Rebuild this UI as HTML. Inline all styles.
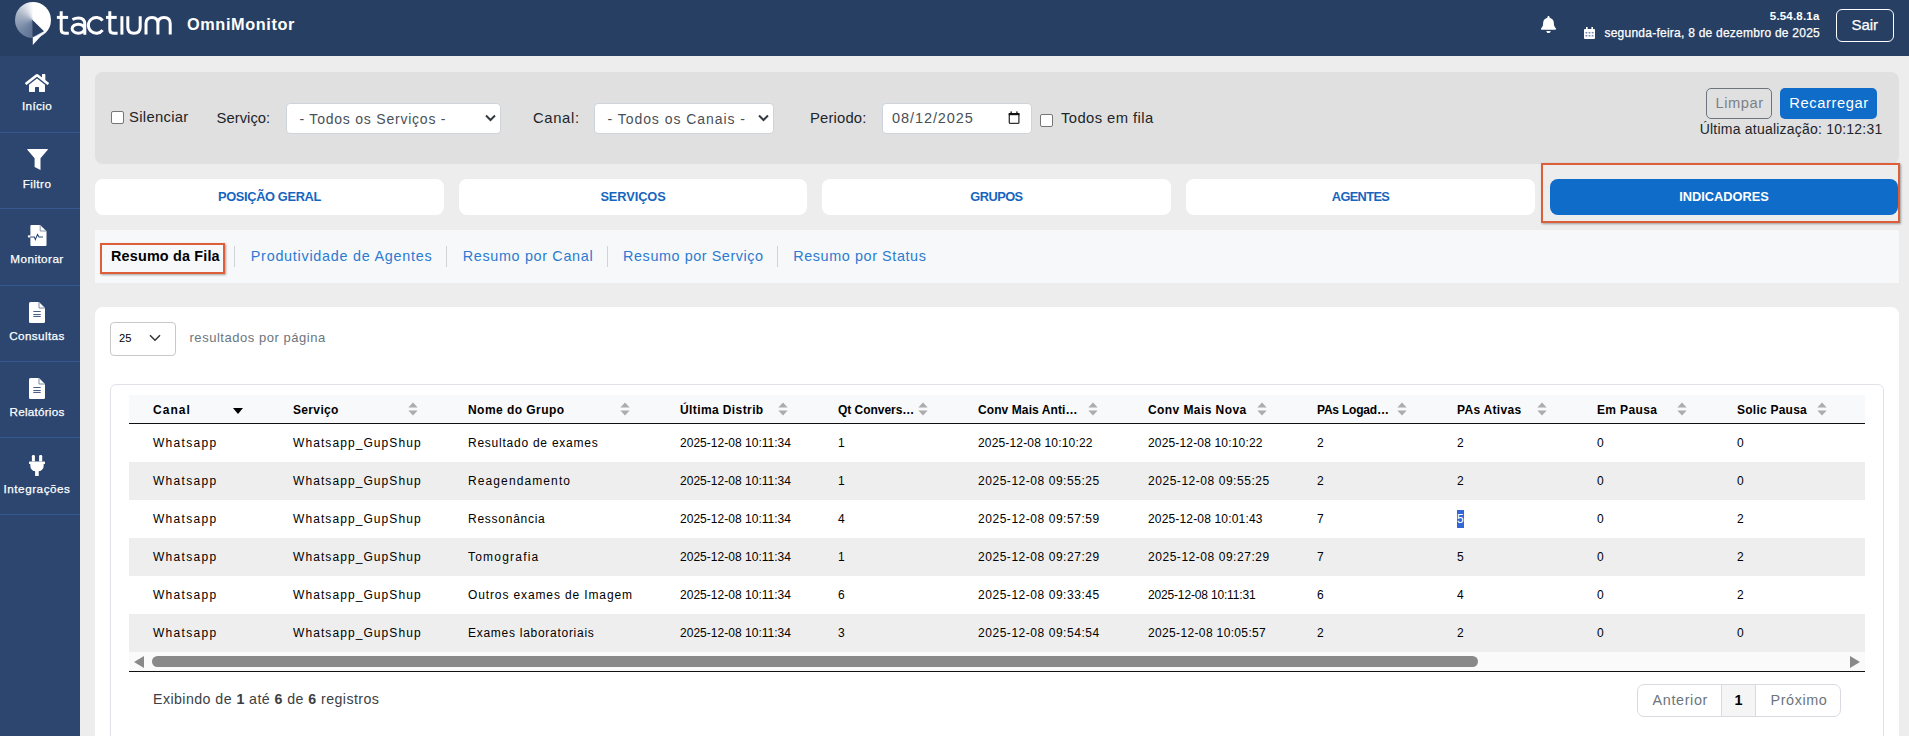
<!DOCTYPE html>
<html><head><meta charset="utf-8"><style>
html,body{margin:0;padding:0;width:1909px;height:736px;overflow:hidden;background:#ededed;}
body{position:relative;font-family:"Liberation Sans", sans-serif;}
.r{position:absolute;box-sizing:content-box;}
.t{position:absolute;white-space:nowrap;line-height:1;}
</style></head><body>
<div class="r" style="left:0px;top:0px;width:1909px;height:56px;background:#283f64;"></div>
<div class="r" style="left:0px;top:56px;width:80px;height:680px;background:#2c4670;"></div>
<div class="r" style="left:0px;top:132px;width:80px;height:1px;background:#34588e;"></div>
<div class="r" style="left:0px;top:208px;width:80px;height:1px;background:#34588e;"></div>
<div class="r" style="left:0px;top:285px;width:80px;height:1px;background:#34588e;"></div>
<div class="r" style="left:0px;top:361px;width:80px;height:1px;background:#34588e;"></div>
<div class="r" style="left:0px;top:437px;width:80px;height:1px;background:#34588e;"></div>
<div class="r" style="left:0px;top:514px;width:80px;height:1px;background:#34588e;"></div>
<div class="r" style="left:15px;top:2px;width:36px;height:36px;border-radius:50%;background:conic-gradient(from 0deg, #ffffff 0deg, #ffffff 135deg, #5f7193 180deg, #7688a6 230deg, #a6b1c4 290deg, #d9dde6 330deg, #ffffff 360deg);"></div>
<svg class="r" style="left:0;top:0" width="60" height="56" viewBox="0 0 60 56">
<path d="M32.5 20 L44 31.3 L32.5 37 Z" fill="#283f64"/>
<path d="M32.8 37.6 L44.5 32 L46 30.5 L32.8 45 Z" fill="#ffffff"/>
</svg>
<svg class="r" style="left:0;top:0" width="180" height="56" viewBox="0 0 180 56" fill="none" stroke="#fff" stroke-width="3.0">
<path d="M61.2 11.2 V29.5 Q61.2 33.2 65 33.2 H68.8"/><path d="M56.9 17.4 H68.1"/>
<path d="M72.4 19.5 Q75.5 17.9 78.5 17.9 Q84.8 17.9 84.8 24 V34.8"/><ellipse cx="78.3" cy="28.7" rx="6.2" ry="4.5"/>
<path d="M102.6 20.6 A7.9 7.9 0 1 0 102.6 30.1"/>
<path d="M109.8 11.2 V29.5 Q109.8 33.2 113.6 33.2 H117.6"/><path d="M106 17.4 H116.7"/>
<path d="M121.9 16.2 V34.6"/>
<path d="M127.8 16.2 V27 Q127.8 33.2 134 33.2 Q140.2 33.2 140.2 27 V16.2"/>
<path d="M146 34.6 V23.5 Q146 17.4 152 17.4 Q157.9 17.4 157.9 23.5 V34.6 M157.9 23.5 Q157.9 17.4 164 17.4 Q170.2 17.4 170.2 23.5 V34.6"/>
</svg>
<div class="t" style="left:187px;top:16.40px;font-size:16.3px;font-weight:700;color:#fff;letter-spacing:0.610px;">OmniMonitor</div>
<svg class="r" style="left:1541px;top:16px" width="15" height="17" viewBox="0 0 448 512" preserveAspectRatio="none"><path fill="#fff" d="M224 512c35.3 0 64-28.7 64-64H160c0 35.3 28.7 64 64 64zm215.4-149.7c-19.3-20.8-55.5-52-55.5-154.3 0-77.700-54.5-139.9-127.9-155.2V32c0-17.7-14.3-32-32-32s-32 14.3-32 32v20.8C118.6 68.1 64.1 130.3 64.1 208c0 102.3-36.2 133.5-55.5 154.3-6 6.5-8.7 14.2-8.600 21.7.1 16.4 13 32 32.1 32h383.8c19.1 0 32-15.6 32.1-32 .1-7.6-2.6-15.3-8.6-21.7z"/></svg>
<div class="t" style="right:89.5px;top:11.47px;font-size:11.5px;font-weight:700;color:#fff;letter-spacing:0.191px;">5.54.8.1a</div>
<svg class="r" style="left:1584px;top:27px" width="11" height="12" viewBox="0 0 11 12"><rect x="0" y="2" width="11" height="10" rx="1" fill="#fff"/><rect x="2" y="0" width="1.6" height="3" fill="#fff"/><rect x="7.4" y="0" width="1.6" height="3" fill="#fff"/><g fill="#7b8ab0"><rect x="1.5" y="5" width="1.8" height="1.5"/><rect x="4.6" y="5" width="1.8" height="1.5"/><rect x="7.7" y="5" width="1.8" height="1.5"/><rect x="1.5" y="8" width="1.8" height="1.5"/><rect x="4.6" y="8" width="1.8" height="1.5"/><rect x="7.7" y="8" width="1.8" height="1.5"/></g></svg>
<div class="t" style="right:89px;top:27.04px;font-size:12px;font-weight:400;color:#fff;letter-spacing:0.243px;-webkit-text-stroke:0.25px currentColor;">segunda-feira, 8 de dezembro de 2025</div>
<div class="r" style="left:1836px;top:9px;width:56px;height:31px;border:1px solid #fff;border-radius:6px;"></div>
<div class="t" style="left:1851.5px;top:16.50px;font-size:15px;font-weight:400;color:#fff;letter-spacing:-0.029px;-webkit-text-stroke:0.25px currentColor;">Sair</div>
<div class="t" style="left:-263px;width:600px;text-align:center;top:100.10px;font-size:11.7px;font-weight:400;color:#fff;letter-spacing:0.352px;-webkit-text-stroke:0.25px currentColor;">Início</div>
<div class="t" style="left:-263px;width:600px;text-align:center;top:177.60px;font-size:11.7px;font-weight:400;color:#fff;letter-spacing:0.463px;-webkit-text-stroke:0.25px currentColor;">Filtro</div>
<div class="t" style="left:-263px;width:600px;text-align:center;top:253.40px;font-size:11.7px;font-weight:400;color:#fff;letter-spacing:0.441px;-webkit-text-stroke:0.25px currentColor;">Monitorar</div>
<div class="t" style="left:-263px;width:600px;text-align:center;top:330.10px;font-size:11.7px;font-weight:400;color:#fff;letter-spacing:0.389px;-webkit-text-stroke:0.25px currentColor;">Consultas</div>
<div class="t" style="left:-263px;width:600px;text-align:center;top:406.10px;font-size:11.7px;font-weight:400;color:#fff;letter-spacing:0.242px;-webkit-text-stroke:0.25px currentColor;">Relatórios</div>
<div class="t" style="left:-263px;width:600px;text-align:center;top:483.10px;font-size:11.7px;font-weight:400;color:#fff;letter-spacing:0.542px;-webkit-text-stroke:0.25px currentColor;">Integrações</div>
<svg class="r" style="left:25.2px;top:73.5px" width="24" height="18" viewBox="0 0 576 450" preserveAspectRatio="none"><path fill="#fff" d="M280.4 148.3L96 300.1V464a16 16 0 0 0 16 16l112.1-.3a16 16 0 0 0 15.9-16V368a16 16 0 0 1 16-16h64a16 16 0 0 1 16 16v95.6a16 16 0 0 0 16 16.1l112.1.3a16 16 0 0 0 16-16V300L295.7 148.3a12.2 12.2 0 0 0-15.3 0zM571.6 251.5L488 182.6V44.1a12 12 0 0 0-12-12h-56a12 12 0 0 0-12 12v72.6L318.5 43a48 48 0 0 0-61 0L4.3 251.5a12 12 0 0 0-1.6 16.9l25.5 31A12 12 0 0 0 45.2 301l235.2-193.7a12.2 12.2 0 0 1 15.3 0L530.9 301a12 12 0 0 0 16.9-1.6l25.5-31a12 12 0 0 0-1.7-16.9z" transform="translate(0,-30)"/></svg>
<svg class="r" style="left:26.5px;top:149px" width="22" height="22" viewBox="0 0 22 22"><path fill="#fff" d="M0.6 0 H20.5 Q21.2 0 20.8 0.7 L13.5 9.2 V20.9 L7.6 18 V9.2 L0.3 0.8 Q0 0 0.6 0 Z"/></svg>
<svg class="r" style="left:22px;top:220px" width="30" height="30" viewBox="0 0 30 30"><path fill="#fff" d="M9.4 4.9 H18.2 L24.5 11.2 V24.9 Q24.5 25.9 23.5 25.9 H9.4 Q8.4 25.9 8.4 24.9 V5.9 Q8.4 4.9 9.4 4.9 Z"/><path fill="none" stroke="#7d8aa3" stroke-width="0.9" d="M18.2 4.9 V11 H24.5"/><rect x="5.9" y="15.4" width="3" height="2" fill="#fff"/><path fill="none" stroke="#2c4670" stroke-width="1.1" d="M8.2 17 H12.4 L13.4 19.6 L15.5 14.4 L17 17 H21"/></svg>
<svg class="r" style="left:29px;top:302px" width="16" height="21" viewBox="0 0 16 21"><path fill="#fff" d="M1.5 0 H10 L16 6 V19.5 Q16 21 14.5 21 H1.5 Q0 21 0 19.5 V1.5 Q0 0 1.5 0 Z"/><path fill="none" stroke="#7d8aa3" stroke-width="1" d="M10 0 V6 H16"/><g fill="#4a5f85"><rect x="4.3" y="9" width="7.4" height="1"/><rect x="4.3" y="12" width="7.4" height="1.1"/><rect x="4.3" y="14" width="7.4" height="1"/></g></svg>
<svg class="r" style="left:29px;top:378px" width="16" height="21" viewBox="0 0 16 21"><path fill="#fff" d="M1.5 0 H10 L16 6 V19.5 Q16 21 14.5 21 H1.5 Q0 21 0 19.5 V1.5 Q0 0 1.5 0 Z"/><path fill="none" stroke="#7d8aa3" stroke-width="1" d="M10 0 V6 H16"/><g fill="#4a5f85"><rect x="4.3" y="9" width="7.4" height="1"/><rect x="4.3" y="12" width="7.4" height="1.1"/><rect x="4.3" y="14" width="7.4" height="1"/></g></svg>
<svg class="r" style="left:29px;top:455px" width="16" height="21" viewBox="0 0 16 21"><g fill="#fff"><rect x="2.9" y="0" width="3" height="6.5" rx="1.2"/><rect x="10.1" y="0" width="3.1" height="6.5" rx="1.2"/><path d="M0.6 6.4 H15.4 Q16 6.4 16 7.2 V8.4 Q16 9 15.4 9 H14.7 V10.2 Q14.7 15.4 9.7 16.3 V21 H6.1 V16.3 Q1.3 15.4 1.3 10.2 V9 H0.6 Q0 9 0 8.4 V7.2 Q0 6.4 0.6 6.4 Z"/></g></svg>
<div class="r" style="left:80px;top:56px;width:1829px;height:680px;background:#ededed;"></div>
<div class="r" style="left:95px;top:72px;width:1804px;height:92px;background:#e0e0e0;border-radius:8px;"></div>
<div class="r" style="left:111px;top:111px;width:11px;height:11px;border:1px solid #767676;border-radius:2px;background:#fff;"></div>
<div class="t" style="left:129px;top:110.47px;font-size:14.8px;font-weight:400;color:#212529;letter-spacing:0.319px;">Silenciar</div>
<div class="t" style="left:216.5px;top:111.47px;font-size:14.8px;font-weight:400;color:#212529;letter-spacing:0.035px;">Serviço:</div>
<div class="r" style="left:286px;top:103px;width:213px;height:29px;border:1px solid #ced4da;border-radius:4px;background:#fff;"></div>
<div class="t" style="left:299.5px;top:112.05px;font-size:14px;font-weight:400;color:#495057;letter-spacing:0.777px;">- Todos os Serviços -</div>
<svg class="r" style="left:485px;top:114px" width="11" height="8" viewBox="0 0 11 8"><path d="M1 1.5 L5.5 6 L10 1.5" fill="none" stroke="#343a40" stroke-width="2"/></svg>
<div class="t" style="left:533px;top:111.47px;font-size:14.8px;font-weight:400;color:#212529;letter-spacing:0.644px;">Canal:</div>
<div class="r" style="left:594px;top:103px;width:178px;height:29px;border:1px solid #ced4da;border-radius:4px;background:#fff;"></div>
<div class="t" style="left:607.5px;top:112.05px;font-size:14px;font-weight:400;color:#495057;letter-spacing:0.952px;">- Todos os Canais -</div>
<svg class="r" style="left:758px;top:114px" width="11" height="8" viewBox="0 0 11 8"><path d="M1 1.5 L5.5 6 L10 1.5" fill="none" stroke="#343a40" stroke-width="2"/></svg>
<div class="t" style="left:810px;top:111.47px;font-size:14.8px;font-weight:400;color:#212529;letter-spacing:0.182px;">Periodo:</div>
<div class="r" style="left:882px;top:103px;width:148px;height:29px;border:1px solid #ced4da;border-radius:4px;background:#fff;"></div>
<div class="t" style="left:892px;top:111.03px;font-size:14.5px;font-weight:400;color:#495057;letter-spacing:0.925px;">08/12/2025</div>
<svg class="r" style="left:1008px;top:111px" width="12" height="13" viewBox="0 0 12 13"><rect x="1.3" y="2.6" width="9.6" height="9.8" rx="1" fill="none" stroke="#333" stroke-width="1.3"/><rect x="0.7" y="2" width="10.8" height="2.2" fill="#111"/><rect x="2.5" y="0.4" width="1.3" height="2" fill="#111"/><rect x="8.3" y="0.4" width="1.3" height="2" fill="#111"/></svg>
<div class="r" style="left:1040px;top:114px;width:11px;height:11px;border:1px solid #767676;border-radius:2px;background:#fff;"></div>
<div class="t" style="left:1061px;top:111.47px;font-size:14.8px;font-weight:400;color:#212529;letter-spacing:0.418px;">Todos em fila</div>
<div class="r" style="left:1706px;top:88px;width:64px;height:29px;border:1px solid #6c757d;border-radius:5px;"></div>
<div class="t" style="left:1715.5px;top:95.66px;font-size:14.7px;font-weight:400;color:#7b8288;letter-spacing:0.559px;">Limpar</div>
<div class="r" style="left:1780px;top:88px;width:97px;height:31px;background:#0f6cc9;border-radius:5px;"></div>
<div class="t" style="left:1789.3px;top:95.66px;font-size:14.7px;font-weight:400;color:#fff;letter-spacing:0.603px;">Recarregar</div>
<div class="t" style="right:26.5px;top:122.05px;font-size:14px;font-weight:400;color:#212529;letter-spacing:0.220px;">Última atualização: 10:12:31</div>
<div class="r" style="left:95px;top:179px;width:349px;height:36px;background:#fff;border-radius:8px;"></div>
<div class="t" style="left:-30.5px;width:600px;text-align:center;top:191.16px;font-size:12.8px;font-weight:700;color:#1565c0;letter-spacing:-0.348px;">POSIÇÃO GERAL</div>
<div class="r" style="left:459px;top:179px;width:348px;height:36px;background:#fff;border-radius:8px;"></div>
<div class="t" style="left:333.0px;width:600px;text-align:center;top:191.16px;font-size:12.8px;font-weight:700;color:#1565c0;letter-spacing:-0.087px;">SERVIÇOS</div>
<div class="r" style="left:822px;top:179px;width:349px;height:36px;background:#fff;border-radius:8px;"></div>
<div class="t" style="left:696.5px;width:600px;text-align:center;top:191.16px;font-size:12.8px;font-weight:700;color:#1565c0;letter-spacing:-0.534px;">GRUPOS</div>
<div class="r" style="left:1186px;top:179px;width:349px;height:36px;background:#fff;border-radius:8px;"></div>
<div class="t" style="left:1060.5px;width:600px;text-align:center;top:191.16px;font-size:12.8px;font-weight:700;color:#1565c0;letter-spacing:-0.646px;">AGENTES</div>
<div class="r" style="left:1550px;top:179px;width:348px;height:36px;background:#0f6cc9;border-radius:8px;"></div>
<div class="t" style="left:1424.0px;width:600px;text-align:center;top:191.16px;font-size:12.8px;font-weight:700;color:#fff;letter-spacing:-0.019px;">INDICADORES</div>
<div class="r" style="left:1541px;top:163px;width:355px;height:56px;border:2px solid #dc5f3a;box-shadow:1px 1px 2px rgba(0,0,0,0.35);"></div>
<div class="r" style="left:95px;top:230px;width:1804px;height:53px;background:#f7f8fa;"></div>
<div class="r" style="left:100px;top:243px;width:121px;height:27px;border:2px solid #dc5f3a;box-shadow:1px 1px 2px rgba(0,0,0,0.35);"></div>
<div class="t" style="left:111px;top:249.01px;font-size:14.4px;font-weight:700;color:#000;letter-spacing:0.172px;">Resumo da Fila</div>
<div class="t" style="left:250.8px;top:249.01px;font-size:14.4px;font-weight:400;color:#2b7bd1;letter-spacing:0.729px;">Produtividade de Agentes</div>
<div class="t" style="left:462.7px;top:249.01px;font-size:14.4px;font-weight:400;color:#2b7bd1;letter-spacing:0.661px;">Resumo por Canal</div>
<div class="t" style="left:623.1px;top:249.01px;font-size:14.4px;font-weight:400;color:#2b7bd1;letter-spacing:0.566px;">Resumo por Serviço</div>
<div class="t" style="left:793.2px;top:249.01px;font-size:14.4px;font-weight:400;color:#2b7bd1;letter-spacing:0.595px;">Resumo por Status</div>
<div class="r" style="left:234px;top:246px;width:1px;height:21px;background:#d0d3d8;"></div>
<div class="r" style="left:446px;top:246px;width:1px;height:21px;background:#d0d3d8;"></div>
<div class="r" style="left:607px;top:246px;width:1px;height:21px;background:#d0d3d8;"></div>
<div class="r" style="left:777px;top:246px;width:1px;height:21px;background:#d0d3d8;"></div>
<div class="r" style="left:95px;top:307px;width:1804px;height:453px;background:#fff;border-radius:8px;"></div>
<div class="r" style="left:110px;top:322px;width:64px;height:32px;border:1px solid #c8c8c8;border-radius:4px;"></div>
<div class="t" style="left:119px;top:332.72px;font-size:11.2px;font-weight:400;color:#000;letter-spacing:0.000px;">25</div>
<svg class="r" style="left:149px;top:334px" width="12" height="8" viewBox="0 0 12 8"><path d="M1 1.2 L6 6.2 L11 1.2" fill="none" stroke="#333" stroke-width="1.5"/></svg>
<div class="t" style="left:189.5px;top:331.20px;font-size:13px;font-weight:400;color:#6c757d;letter-spacing:0.533px;">resultados por página</div>
<div class="r" style="left:110px;top:384px;width:1772px;height:400px;border:1px solid #dfe3e8;border-radius:6px;"></div>
<div class="r" style="left:129px;top:395px;width:1736px;height:28px;background:#f8f9fa;"></div>
<div class="r" style="left:129px;top:423px;width:1736px;height:1px;background:#111;"></div>
<div class="t" style="left:153px;top:404.04px;font-size:12px;font-weight:700;color:#000;letter-spacing:1.028px;">Canal</div>
<svg class="r" style="left:233px;top:408px" width="10" height="6" viewBox="0 0 10 6"><path d="M0 0 H10 L5 6 Z" fill="#000"/></svg>
<div class="t" style="left:293px;top:404.04px;font-size:12px;font-weight:700;color:#000;letter-spacing:0.340px;">Serviço</div>
<svg class="r" style="left:408.2px;top:401.5px" width="10" height="14" viewBox="0 0 10 14"><path d="M0.35 5.4 L5 0.4 L9.65 5.4 Z M0.35 8.4 L5 13.4 L9.65 8.4 Z" fill="#acacac"/></svg>
<div class="t" style="left:468px;top:404.04px;font-size:12px;font-weight:700;color:#000;letter-spacing:0.452px;">Nome do Grupo</div>
<svg class="r" style="left:619.7px;top:401.5px" width="10" height="14" viewBox="0 0 10 14"><path d="M0.35 5.4 L5 0.4 L9.65 5.4 Z M0.35 8.4 L5 13.4 L9.65 8.4 Z" fill="#acacac"/></svg>
<div class="t" style="left:680px;top:404.04px;font-size:12px;font-weight:700;color:#000;letter-spacing:0.399px;">Última Distrib</div>
<svg class="r" style="left:778.1px;top:401.5px" width="10" height="14" viewBox="0 0 10 14"><path d="M0.35 5.4 L5 0.4 L9.65 5.4 Z M0.35 8.4 L5 13.4 L9.65 8.4 Z" fill="#acacac"/></svg>
<div class="t" style="left:838px;top:404.04px;font-size:12px;font-weight:700;color:#000;letter-spacing:-0.039px;">Qt Convers…</div>
<svg class="r" style="left:918.1px;top:401.5px" width="10" height="14" viewBox="0 0 10 14"><path d="M0.35 5.4 L5 0.4 L9.65 5.4 Z M0.35 8.4 L5 13.4 L9.65 8.4 Z" fill="#acacac"/></svg>
<div class="t" style="left:978px;top:404.04px;font-size:12px;font-weight:700;color:#000;letter-spacing:0.090px;">Conv Mais Anti…</div>
<svg class="r" style="left:1087.9px;top:401.5px" width="10" height="14" viewBox="0 0 10 14"><path d="M0.35 5.4 L5 0.4 L9.65 5.4 Z M0.35 8.4 L5 13.4 L9.65 8.4 Z" fill="#acacac"/></svg>
<div class="t" style="left:1148px;top:404.04px;font-size:12px;font-weight:700;color:#000;letter-spacing:0.423px;">Conv Mais Nova</div>
<svg class="r" style="left:1256.7px;top:401.5px" width="10" height="14" viewBox="0 0 10 14"><path d="M0.35 5.4 L5 0.4 L9.65 5.4 Z M0.35 8.4 L5 13.4 L9.65 8.4 Z" fill="#acacac"/></svg>
<div class="t" style="left:1317px;top:404.04px;font-size:12px;font-weight:700;color:#000;letter-spacing:-0.209px;">PAs Logad…</div>
<svg class="r" style="left:1397.4px;top:401.5px" width="10" height="14" viewBox="0 0 10 14"><path d="M0.35 5.4 L5 0.4 L9.65 5.4 Z M0.35 8.4 L5 13.4 L9.65 8.4 Z" fill="#acacac"/></svg>
<div class="t" style="left:1457px;top:404.04px;font-size:12px;font-weight:700;color:#000;letter-spacing:0.305px;">PAs Ativas</div>
<svg class="r" style="left:1537.2px;top:401.5px" width="10" height="14" viewBox="0 0 10 14"><path d="M0.35 5.4 L5 0.4 L9.65 5.4 Z M0.35 8.4 L5 13.4 L9.65 8.4 Z" fill="#acacac"/></svg>
<div class="t" style="left:1597px;top:404.04px;font-size:12px;font-weight:700;color:#000;letter-spacing:0.361px;">Em Pausa</div>
<svg class="r" style="left:1677.0px;top:401.5px" width="10" height="14" viewBox="0 0 10 14"><path d="M0.35 5.4 L5 0.4 L9.65 5.4 Z M0.35 8.4 L5 13.4 L9.65 8.4 Z" fill="#acacac"/></svg>
<div class="t" style="left:1737px;top:404.04px;font-size:12px;font-weight:700;color:#000;letter-spacing:0.242px;">Solic Pausa</div>
<svg class="r" style="left:1817.3px;top:401.5px" width="10" height="14" viewBox="0 0 10 14"><path d="M0.35 5.4 L5 0.4 L9.65 5.4 Z M0.35 8.4 L5 13.4 L9.65 8.4 Z" fill="#acacac"/></svg>
<div class="t" style="left:153px;top:437.04px;font-size:12px;font-weight:400;color:#000;letter-spacing:1.296px;">Whatsapp</div>
<div class="t" style="left:293px;top:437.04px;font-size:12px;font-weight:400;color:#000;letter-spacing:1.079px;">Whatsapp_GupShup</div>
<div class="t" style="left:468px;top:437.04px;font-size:12px;font-weight:400;color:#000;letter-spacing:0.757px;">Resultado de exames</div>
<div class="t" style="left:680px;top:437.04px;font-size:12px;font-weight:400;color:#000;letter-spacing:0.025px;">2025-12-08 10:11:34</div>
<div class="t" style="left:838px;top:437.04px;font-size:12px;font-weight:400;color:#000;letter-spacing:0.000px;">1</div>
<div class="t" style="left:978px;top:437.04px;font-size:12px;font-weight:400;color:#000;letter-spacing:0.165px;">2025-12-08 10:10:22</div>
<div class="t" style="left:1148px;top:437.04px;font-size:12px;font-weight:400;color:#000;letter-spacing:0.165px;">2025-12-08 10:10:22</div>
<div class="t" style="left:1317px;top:437.04px;font-size:12px;font-weight:400;color:#000;letter-spacing:0.000px;">2</div>
<div class="t" style="left:1457px;top:437.04px;font-size:12px;font-weight:400;color:#000;letter-spacing:0.000px;">2</div>
<div class="t" style="left:1597px;top:437.04px;font-size:12px;font-weight:400;color:#000;letter-spacing:0.000px;">0</div>
<div class="t" style="left:1737px;top:437.04px;font-size:12px;font-weight:400;color:#000;letter-spacing:0.000px;">0</div>
<div class="r" style="left:129px;top:462px;width:1736px;height:38px;background:#eeeeee;"></div>
<div class="t" style="left:153px;top:475.04px;font-size:12px;font-weight:400;color:#000;letter-spacing:1.296px;">Whatsapp</div>
<div class="t" style="left:293px;top:475.04px;font-size:12px;font-weight:400;color:#000;letter-spacing:1.079px;">Whatsapp_GupShup</div>
<div class="t" style="left:468px;top:475.04px;font-size:12px;font-weight:400;color:#000;letter-spacing:1.105px;">Reagendamento</div>
<div class="t" style="left:680px;top:475.04px;font-size:12px;font-weight:400;color:#000;letter-spacing:0.025px;">2025-12-08 10:11:34</div>
<div class="t" style="left:838px;top:475.04px;font-size:12px;font-weight:400;color:#000;letter-spacing:0.000px;">1</div>
<div class="t" style="left:978px;top:475.04px;font-size:12px;font-weight:400;color:#000;letter-spacing:0.542px;">2025-12-08 09:55:25</div>
<div class="t" style="left:1148px;top:475.04px;font-size:12px;font-weight:400;color:#000;letter-spacing:0.542px;">2025-12-08 09:55:25</div>
<div class="t" style="left:1317px;top:475.04px;font-size:12px;font-weight:400;color:#000;letter-spacing:0.000px;">2</div>
<div class="t" style="left:1457px;top:475.04px;font-size:12px;font-weight:400;color:#000;letter-spacing:0.000px;">2</div>
<div class="t" style="left:1597px;top:475.04px;font-size:12px;font-weight:400;color:#000;letter-spacing:0.000px;">0</div>
<div class="t" style="left:1737px;top:475.04px;font-size:12px;font-weight:400;color:#000;letter-spacing:0.000px;">0</div>
<div class="t" style="left:153px;top:513.04px;font-size:12px;font-weight:400;color:#000;letter-spacing:1.296px;">Whatsapp</div>
<div class="t" style="left:293px;top:513.04px;font-size:12px;font-weight:400;color:#000;letter-spacing:1.079px;">Whatsapp_GupShup</div>
<div class="t" style="left:468px;top:513.04px;font-size:12px;font-weight:400;color:#000;letter-spacing:0.742px;">Ressonância</div>
<div class="t" style="left:680px;top:513.04px;font-size:12px;font-weight:400;color:#000;letter-spacing:0.025px;">2025-12-08 10:11:34</div>
<div class="t" style="left:838px;top:513.04px;font-size:12px;font-weight:400;color:#000;letter-spacing:0.000px;">4</div>
<div class="t" style="left:978px;top:513.04px;font-size:12px;font-weight:400;color:#000;letter-spacing:0.542px;">2025-12-08 09:57:59</div>
<div class="t" style="left:1148px;top:513.04px;font-size:12px;font-weight:400;color:#000;letter-spacing:0.165px;">2025-12-08 10:01:43</div>
<div class="t" style="left:1317px;top:513.04px;font-size:12px;font-weight:400;color:#000;letter-spacing:0.000px;">7</div>
<div class="r" style="left:1457px;top:510px;width:7px;height:18px;background:#3367d6;"></div>
<div class="t" style="left:1457px;top:513.04px;font-size:12px;font-weight:400;color:#fff;letter-spacing:0.000px;">5</div>
<div class="t" style="left:1597px;top:513.04px;font-size:12px;font-weight:400;color:#000;letter-spacing:0.000px;">0</div>
<div class="t" style="left:1737px;top:513.04px;font-size:12px;font-weight:400;color:#000;letter-spacing:0.000px;">2</div>
<div class="r" style="left:129px;top:538px;width:1736px;height:38px;background:#eeeeee;"></div>
<div class="t" style="left:153px;top:551.04px;font-size:12px;font-weight:400;color:#000;letter-spacing:1.296px;">Whatsapp</div>
<div class="t" style="left:293px;top:551.04px;font-size:12px;font-weight:400;color:#000;letter-spacing:1.079px;">Whatsapp_GupShup</div>
<div class="t" style="left:468px;top:551.04px;font-size:12px;font-weight:400;color:#000;letter-spacing:1.214px;">Tomografia</div>
<div class="t" style="left:680px;top:551.04px;font-size:12px;font-weight:400;color:#000;letter-spacing:0.025px;">2025-12-08 10:11:34</div>
<div class="t" style="left:838px;top:551.04px;font-size:12px;font-weight:400;color:#000;letter-spacing:0.000px;">1</div>
<div class="t" style="left:978px;top:551.04px;font-size:12px;font-weight:400;color:#000;letter-spacing:0.542px;">2025-12-08 09:27:29</div>
<div class="t" style="left:1148px;top:551.04px;font-size:12px;font-weight:400;color:#000;letter-spacing:0.542px;">2025-12-08 09:27:29</div>
<div class="t" style="left:1317px;top:551.04px;font-size:12px;font-weight:400;color:#000;letter-spacing:0.000px;">7</div>
<div class="t" style="left:1457px;top:551.04px;font-size:12px;font-weight:400;color:#000;letter-spacing:0.000px;">5</div>
<div class="t" style="left:1597px;top:551.04px;font-size:12px;font-weight:400;color:#000;letter-spacing:0.000px;">0</div>
<div class="t" style="left:1737px;top:551.04px;font-size:12px;font-weight:400;color:#000;letter-spacing:0.000px;">2</div>
<div class="t" style="left:153px;top:589.04px;font-size:12px;font-weight:400;color:#000;letter-spacing:1.296px;">Whatsapp</div>
<div class="t" style="left:293px;top:589.04px;font-size:12px;font-weight:400;color:#000;letter-spacing:1.079px;">Whatsapp_GupShup</div>
<div class="t" style="left:468px;top:589.04px;font-size:12px;font-weight:400;color:#000;letter-spacing:0.876px;">Outros exames de Imagem</div>
<div class="t" style="left:680px;top:589.04px;font-size:12px;font-weight:400;color:#000;letter-spacing:0.025px;">2025-12-08 10:11:34</div>
<div class="t" style="left:838px;top:589.04px;font-size:12px;font-weight:400;color:#000;letter-spacing:0.000px;">6</div>
<div class="t" style="left:978px;top:589.04px;font-size:12px;font-weight:400;color:#000;letter-spacing:0.542px;">2025-12-08 09:33:45</div>
<div class="t" style="left:1148px;top:589.04px;font-size:12px;font-weight:400;color:#000;letter-spacing:-0.164px;">2025-12-08 10:11:31</div>
<div class="t" style="left:1317px;top:589.04px;font-size:12px;font-weight:400;color:#000;letter-spacing:0.000px;">6</div>
<div class="t" style="left:1457px;top:589.04px;font-size:12px;font-weight:400;color:#000;letter-spacing:0.000px;">4</div>
<div class="t" style="left:1597px;top:589.04px;font-size:12px;font-weight:400;color:#000;letter-spacing:0.000px;">0</div>
<div class="t" style="left:1737px;top:589.04px;font-size:12px;font-weight:400;color:#000;letter-spacing:0.000px;">2</div>
<div class="r" style="left:129px;top:614px;width:1736px;height:38px;background:#eeeeee;"></div>
<div class="t" style="left:153px;top:627.04px;font-size:12px;font-weight:400;color:#000;letter-spacing:1.296px;">Whatsapp</div>
<div class="t" style="left:293px;top:627.04px;font-size:12px;font-weight:400;color:#000;letter-spacing:1.079px;">Whatsapp_GupShup</div>
<div class="t" style="left:468px;top:627.04px;font-size:12px;font-weight:400;color:#000;letter-spacing:0.723px;">Exames laboratoriais</div>
<div class="t" style="left:680px;top:627.04px;font-size:12px;font-weight:400;color:#000;letter-spacing:0.025px;">2025-12-08 10:11:34</div>
<div class="t" style="left:838px;top:627.04px;font-size:12px;font-weight:400;color:#000;letter-spacing:0.000px;">3</div>
<div class="t" style="left:978px;top:627.04px;font-size:12px;font-weight:400;color:#000;letter-spacing:0.542px;">2025-12-08 09:54:54</div>
<div class="t" style="left:1148px;top:627.04px;font-size:12px;font-weight:400;color:#000;letter-spacing:0.353px;">2025-12-08 10:05:57</div>
<div class="t" style="left:1317px;top:627.04px;font-size:12px;font-weight:400;color:#000;letter-spacing:0.000px;">2</div>
<div class="t" style="left:1457px;top:627.04px;font-size:12px;font-weight:400;color:#000;letter-spacing:0.000px;">2</div>
<div class="t" style="left:1597px;top:627.04px;font-size:12px;font-weight:400;color:#000;letter-spacing:0.000px;">0</div>
<div class="t" style="left:1737px;top:627.04px;font-size:12px;font-weight:400;color:#000;letter-spacing:0.000px;">0</div>
<div class="r" style="left:129px;top:652px;width:1736px;height:19px;background:#fafafa;"></div>
<svg class="r" style="left:134px;top:656px" width="10" height="12" viewBox="0 0 10 12"><path d="M10 0 V12 L0 6 Z" fill="#898989"/></svg>
<div class="r" style="left:152px;top:656px;width:1326px;height:11px;border-radius:5.5px;background:#898989;"></div>
<svg class="r" style="left:1850px;top:656px" width="10" height="12" viewBox="0 0 10 12"><path d="M0 0 V12 L10 6 Z" fill="#898989"/></svg>
<div class="r" style="left:129px;top:671px;width:1736px;height:1px;background:#111;"></div>
<div class="t" style="left:153px;top:692.18px;font-size:14.2px;color:#3c4043;letter-spacing:0.44px;">Exibindo de <b>1</b> até <b>6</b> de <b>6</b> registros</div>
<div class="r" style="left:1637px;top:684px;width:202px;height:31px;border:1px solid #d7dbe0;border-radius:7px;"></div>
<div class="r" style="left:1722px;top:685px;width:33px;height:31px;background:#f5f5f5;"></div>
<div class="r" style="left:1721px;top:685px;width:1px;height:31px;background:#d7dbe0;"></div>
<div class="r" style="left:1755px;top:685px;width:1px;height:31px;background:#d7dbe0;"></div>
<div class="t" style="left:1652.5px;top:692.91px;font-size:14.4px;font-weight:400;color:#6c757d;letter-spacing:0.644px;">Anterior</div>
<div class="t" style="left:1438.5px;width:600px;text-align:center;top:692.91px;font-size:14.4px;font-weight:700;color:#000;letter-spacing:0.000px;">1</div>
<div class="t" style="left:1770.6px;top:692.91px;font-size:14.4px;font-weight:400;color:#6c757d;letter-spacing:0.553px;">Próximo</div>
</body></html>
